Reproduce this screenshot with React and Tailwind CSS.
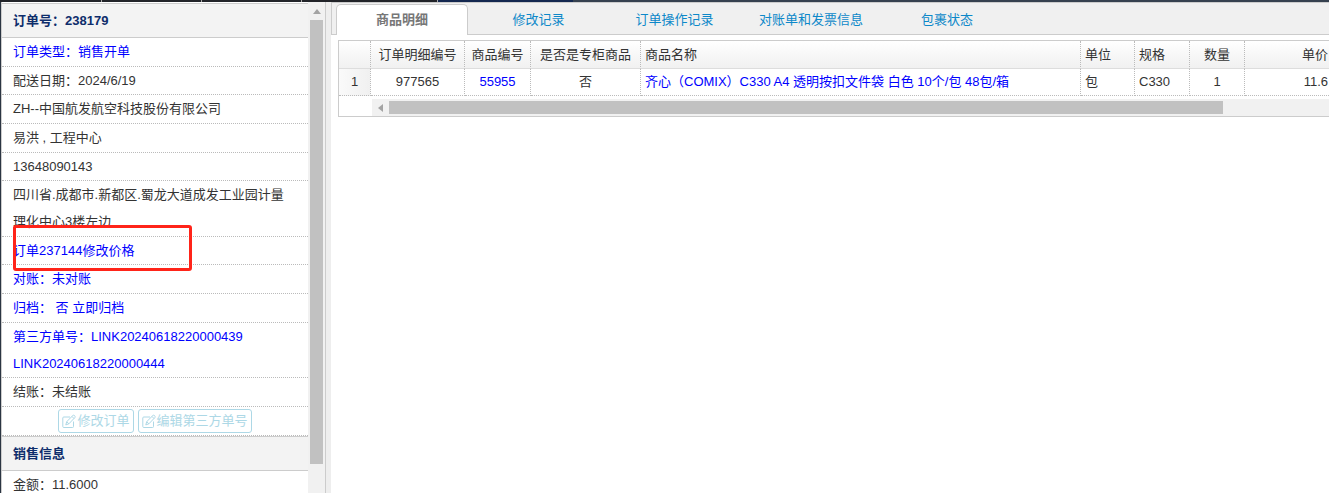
import React, { useState } from 'react';

const tabs = ['商品明细', '修改记录', '订单操作记录', '对账单和发票信息', '包裹状态'];

const EditIcon = () => (
  <svg className="h-[15px] w-3.5" viewBox="0 0 14 14" fill="none" stroke="currentColor" strokeLinejoin="round" aria-hidden="true">
    <path d="M8 2.5H1.8Q.8 2.5 .8 3.5V12Q.8 13 1.8 13H10.5Q11.5 13 11.5 12V7" />
    <path d="M3.8 10.4L4.7 7.2L11 .9Q11.6 .5 12.2 .9L13 1.7Q13.5 2.3 13 2.9L6.9 9.3Z" />
    <path d="M10 2L12 4M4.7 7.2L6.9 9.3" />
  </svg>
);

const Row = ({ children, blue }) => (
  <li className={`grow border-b border-dotted border-[#bbb] pl-[11px] pr-4 leading-[27px] ${blue ? 'text-[#0000ff]' : ''}`}>
    {children}
  </li>
);

const SectionTitle = ({ children }) => (
  <h2 className="border-y border-[#ccc] bg-[#f3f3f3] pl-[11px] font-bold leading-[33px] text-[#0e2d6b]">{children}</h2>
);

const OrderPanel = () => (
  <aside className="flex w-[324px] shrink-0 overflow-hidden border-r border-[#ccc]">
    <div className="min-w-0 grow pt-px">
      <SectionTitle>订单号：238179</SectionTitle>
      <ul className="flex min-h-[398px] flex-col">
        <Row blue>订单类型：销售开单</Row>
        <Row>配送日期：2024/6/19</Row>
        <Row>ZH--中国航发航空科技股份有限公司</Row>
        <Row>易洪 , 工程中心</Row>
        <Row>13648090143</Row>
        <Row>四川省.成都市.新都区.蜀龙大道成发工业园计量理化中心3楼左边</Row>
        <Row blue>
          <div className="relative">
            订单237144修改价格
            {/* highlight frame */}
            <span className="absolute -top-3 left-0 h-[46px] w-[179px] rounded-[3px] border-3 border-[#ff2419]" />
          </div>
        </Row>
        <Row blue>对账：未对账</Row>
        <Row blue>归档： 否 <a href="#archive">立即归档</a></Row>
        <Row blue>第三方单号：LINK20240618220000439<br />LINK20240618220000444</Row>
        <Row>结账：未结账</Row>
        <li className="flex h-[29px] shrink-0 items-center justify-center gap-1 border-b border-dotted border-[#bbb] text-[#add8e6]">
          <button className="flex h-6 items-center gap-px rounded-[3px] border border-[#add8e6] px-[3px]"><EditIcon />修改订单</button>
          <button className="flex h-6 items-center gap-px rounded-[3px] border border-[#add8e6] px-[3px]"><EditIcon />编辑第三方单号</button>
        </li>
      </ul>
      <SectionTitle>销售信息</SectionTitle>
      <ul className="flex flex-col">
        <Row>金额：11.6000</Row>
      </ul>
    </div>
    {/* scrollbar */}
    <div className="flex w-[17px] shrink-0 flex-col items-center bg-[#f1f1f1] pt-px">
      <svg className="my-1.5 h-[5px] w-2" viewBox="0 0 8 5"><path d="M0 5L4 0L8 5Z" fill="#a3a3a3" /></svg>
      <div className="h-[444px] w-[13px] bg-[#c1c1c1]" />
    </div>
  </aside>
);

const TabBar = () => {
  const [active, setActive] = useState(0);
  const widths = ['w-[132px]', 'w-[141px]', 'w-[131px]', 'w-[142px]', 'w-[130px]'];

  return (
    <div className="flex h-[33px] items-end border-y border-l border-[#ccc] bg-[#f0f0f0] pl-1" role="tablist">
      {tabs.map((tab, i) => (
        <button
          key={tab}
          role="tab"
          aria-selected={i === active}
          onClick={() => setActive(i)}
          className={`${widths[i]} ${
            i === active
              ? '-mb-px h-[31px] rounded-t-[5px] border border-b-0 border-[#ccc] bg-white font-bold text-[#777]'
              : 'h-[29px] text-[#0d88c9]'
          }`}
        >
          {tab}
        </button>
      ))}
    </div>
  );
};

const columns = [
  { title: '', value: '1', width: 'w-8', align: 'text-center' },
  { title: '订单明细编号', value: '977565', width: 'w-[94px]', align: 'text-center' },
  { title: '商品编号', value: '55955', width: 'w-[66px]', align: 'text-center', link: true },
  { title: '是否是专柜商品', value: '否', width: 'w-[110px]', align: 'text-center' },
  { title: '商品名称', value: '齐心（COMIX）C330 A4 透明按扣文件袋 白色 10个/包 48包/箱', width: 'w-[440px]', align: 'text-left', link: true },
  { title: '单位', value: '包', width: 'w-[54px]', align: 'text-left' },
  { title: '规格', value: 'C330', width: 'w-[55px]', align: 'text-left' },
  { title: '数量', value: '1', width: 'w-[55px]', align: 'text-center' },
  { title: '单价', value: '11.6', width: '', align: 'text-right' },
];

const DetailGrid = () => (
  <div className="ml-[7px] mt-[5px] border border-r-0 border-[#ccc]">
    <table className="w-full table-fixed border-separate border-spacing-0 whitespace-nowrap">
      <thead>
        <tr className="h-7 bg-linear-to-b from-white to-[#f0f0f0]">
          {columns.map((c, i) => (
            <th key={i} className={`${c.width} ${c.align} border-b border-b-[#ddd] font-normal ${i < 8 ? 'border-r border-r-[#bbb] px-1 [border-right-style:dotted]' : 'pr-px'}`}>
              {c.title}
            </th>
          ))}
        </tr>
      </thead>
      <tbody>
        <tr className="h-[27px]">
          {columns.map((c, i) => (
            <td key={i} className={`${c.align} border-b border-dotted border-[#bbb] ${i < 8 ? 'border-r px-1' : 'pr-px'} ${i === 0 ? 'bg-linear-to-r from-[#fafafa] to-[#f0f0f0]' : ''}`}>
              {c.link ? <a href="#item" className="text-[#0000ff]">{c.value}</a> : c.value}
            </td>
          ))}
        </tr>
      </tbody>
    </table>
    {/* horizontal scrollbar */}
    <div className="ml-[33px] mt-[3px] flex h-[17px] items-center bg-[#f1f1f1]">
      <svg className="mx-1.5 h-2 w-[5px]" viewBox="0 0 5 8"><path d="M5 0L0 4L5 8Z" fill="#a3a3a3" /></svg>
      <div className="mr-[106px] h-[13px] grow bg-[#c1c1c1]" />
    </div>
  </div>
);

export default function App() {
  return (
    <div className="flex h-screen flex-col overflow-hidden bg-white font-['Liberation_Sans','Noto_Sans_CJK_SC',sans-serif] text-[13px] text-[#333]">
      {/* strip of the window behind */}
      <div className="flex h-0.5 shrink-0 bg-[#36414f]">
        <div className="w-[102px] border-r border-[#aaa] bg-[#222429]" />
        <div className="w-[100px] border-r border-[#aaa] bg-[#222429]" />
        <div className="w-[100px] border-r border-[#aaa] bg-[#222429]" />
        <div className="w-[136px] border-r border-[#aaa] bg-[#222429]" />
        <div className="w-[135px] bg-[#142850]" />
      </div>
      <div className="flex min-h-0 grow">
        <div className="w-px shrink-0 bg-[#2b3542]" />
        <div className="w-px shrink-0 bg-[#ccc]" />
        <OrderPanel />
        <div className="w-[5px] shrink-0 bg-[#eee]" />
        <main className="min-w-0 grow">
          <TabBar />
          <DetailGrid />
        </main>
      </div>
    </div>
  );
}
